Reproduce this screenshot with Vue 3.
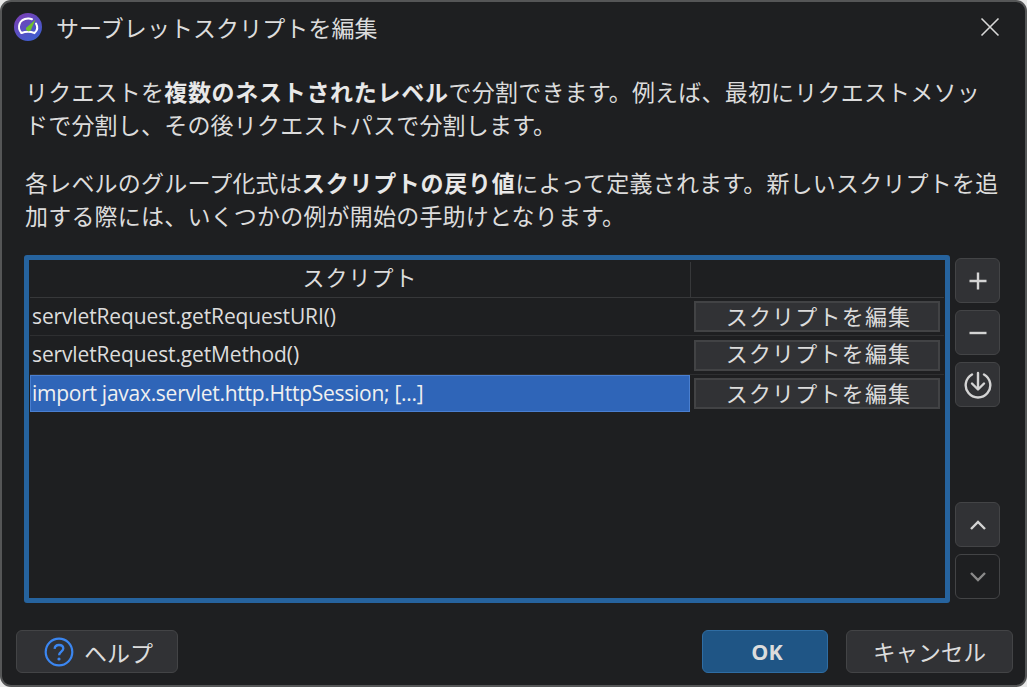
<script setup>
const rows = [
  { text: 'servletRequest.getRequestURI()' },
  { text: 'servletRequest.getMethod()' },
  { text: 'import javax.servlet.http.HttpSession; [...]', selected: true }
]
</script>

<template>
  <div class="win">
    <header class="title">
      <svg class="logo" width="28" height="28" viewBox="0 0 28 28">
        <defs>
          <linearGradient id="lg" x1="0.2" y1="0" x2="0.8" y2="1">
            <stop offset="0" stop-color="#7a3fb5" />
            <stop offset="1" stop-color="#3a5fd0" />
          </linearGradient>
        </defs>
        <circle cx="14" cy="14" r="14" fill="url(#lg)" />
        <path d="M7.5 20C3 15 4.5 6 14 5.5C15.5 5.4 17 5.8 18 6.2" fill="none" stroke="#fff" stroke-width="2" stroke-linecap="round" />
        <path d="M22 10.5C24 14 23.5 17.5 20.5 20C16 18.3 12 18.3 7.5 20" fill="none" stroke="#fff" stroke-width="2" stroke-linecap="round" />
        <path d="M21.5 6.5L16.8 17.2A2.8 2.8 0 0 1 11.9 15Z" fill="#6fc02d" />
      </svg>
      <span class="title-text">サーブレットスクリプトを編集</span>
      <svg class="close" width="20" height="20" viewBox="0 0 20 20">
        <path d="M1.5 1.5L18.5 18.5M18.5 1.5L1.5 18.5" stroke="#d8d8d8" stroke-width="1.6" fill="none" />
      </svg>
    </header>

    <section class="desc">
      <p>リクエストを<b>複数のネストされたレベル</b>で分割できます。例えば、最初にリクエストメソッ<br />ドで分割し、その後リクエストパスで分割します。</p>
      <p>各レベルのグループ化式は<b>スクリプトの戻り値</b>によって定義されます。新しいスクリプトを追<br />加する際には、いくつかの例が開始の手助けとなります。</p>
    </section>

    <section class="body">
      <div class="table">
        <div class="thead">
          <div class="th main">スクリプト</div>
          <div class="th side"></div>
        </div>
        <div v-for="r in rows" :key="r.text" class="row">
          <div class="cell" :class="{ sel: r.selected }">{{ r.text }}</div>
          <div class="action"><button class="edit">スクリプトを編集</button></div>
        </div>
      </div>

      <aside class="tools">
        <button class="tool">
          <svg width="22" height="22" viewBox="0 0 22 22"><path d="M11 2.5V19.5M2.5 11H19.5" stroke="#d4d4d4" stroke-width="2.4" fill="none" /></svg>
        </button>
        <button class="tool">
          <svg width="22" height="22" viewBox="0 0 22 22"><path d="M2.5 11H19.5" stroke="#d4d4d4" stroke-width="2.4" fill="none" /></svg>
        </button>
        <button class="tool">
          <svg width="28" height="28" viewBox="0 0 28 28" fill="none" stroke="#d4d4d4" stroke-width="2.4">
            <path d="M8 3.5A12.3 12.3 0 1 0 20 3.5" stroke-linecap="round" />
            <path d="M14 2V18M8 12.5L14 18.5L20 12.5" stroke-linecap="round" stroke-linejoin="round" />
          </svg>
        </button>
        <div class="spacer"></div>
        <button class="tool">
          <svg width="18" height="12" viewBox="0 0 18 12"><path d="M2 10L9 3L16 10" stroke="#d4d4d4" stroke-width="2.4" fill="none" /></svg>
        </button>
        <button class="tool off">
          <svg width="18" height="12" viewBox="0 0 18 12"><path d="M2 2L9 9L16 2" stroke="#8a8a8a" stroke-width="2.4" fill="none" /></svg>
        </button>
      </aside>
    </section>

    <footer class="foot">
      <button class="btn help">
        <svg width="30" height="30" viewBox="0 0 30 30" fill="none">
          <circle cx="15" cy="15" r="13.3" stroke="#3b86f0" stroke-width="2.2" />
          <path d="M10.6 11.8C10.8 9.2 12.6 8 15 8C17.6 8 19.3 9.5 19.3 11.6C19.3 14.6 15.1 14.8 15.1 18.2" stroke="#3b86f0" stroke-width="2.3" />
          <circle cx="15" cy="22" r="1.6" fill="#3b86f0" />
        </svg>
        <span>ヘルプ</span>
      </button>
      <div class="grow"></div>
      <button class="btn ok">OK</button>
      <button class="btn cancel">キャンセル</button>
    </footer>
  </div>
</template>

<style scoped>
.win {
  box-sizing: border-box;
  width: 1027px;
  height: 687px;
  background: #1e1f21;
  border: 2px solid #555657;
  border-radius: 11px;
  color: #dcdcdc;
  font-family: "Noto Sans CJK JP", "Noto Sans", sans-serif;
  display: flex;
  flex-direction: column;
  overflow: hidden;
}
.title {
  display: flex;
  align-items: center;
  height: 49px;
  padding: 0 25px 0 12px;
  flex: none;
}
.logo { flex: none; }
.title-text {
  margin-left: 14px;
  font-size: 23px;
  letter-spacing: 0.07px;
  flex: 1;
}
.close { flex: none; }
.desc {
  padding: 24px 0 0 23px;
  font-size: 23px;
  letter-spacing: 0.2px;
  line-height: 33px;
  height: 182px;
  box-sizing: border-box;
  flex: none;
}
.desc p { margin: 0 0 25px; white-space: nowrap; }
.desc b { font-weight: 700; color: #e8e8e8; letter-spacing: 0.7px; }
.body {
  display: flex;
  gap: 5px;
  padding-left: 22px;
  height: 348px;
  flex: none;
  margin-top: 22px;
}
.table {
  box-sizing: border-box;
  width: 926px;
  height: 348px;
  border: 5px solid #26639e;
  border-radius: 3px;
  background: #1e1f21;
  padding: 2px 1px 0 1px;
  font-size: 20px;
}
.thead {
  display: flex;
  height: 36px;
  box-sizing: border-box;
  border-bottom: 1px solid #37383a;
}
.th {
  display: flex;
  align-items: center;
  justify-content: center;
}
.th.main {
  width: 661px;
  font-size: 22px;
  letter-spacing: 1px;
  padding-bottom: 7px;
  box-sizing: border-box;
  border-right: 1px solid #37383a;
}
.th.side { flex: 1; }
.row {
  display: flex;
  height: 38px;
  box-sizing: border-box;
  border-bottom: 1px solid #2e2f31;
}
.row:nth-child(3) { height: 39px; }
.row:nth-child(3) .action { padding-top: 4px; }
.row:nth-child(3) .edit { line-height: 20px; padding-bottom: 8px; }
.row:last-child { border-bottom: 0; }
.cell {
  width: 660px;
  box-sizing: border-box;
  display: flex;
  align-items: center;
  padding: 0 0 2px 2px;
  font-family: "Open Sans", sans-serif;
  font-size: 21px;
  letter-spacing: -0.13px;
  color: #dcdcdc;
}
.cell.sel {
  background: #2f65b8;
  border: 1px solid #4a7fd0;
  padding: 0 0 2px 1px;
  color: #f0f0f0;
  height: 37px;
  letter-spacing: -0.27px;
}
.action {
  flex: 1;
  padding: 3px 4px 3px 4px;
  display: flex;
}
.edit {
  flex: 1;
  height: 31px;
  background: #313235;
  border: 2px solid #424345;
  color: #dcdcdc;
  font-family: "Noto Sans CJK JP", sans-serif;
  font-size: 22px;
  line-height: 24px;
  padding: 0 0 4px 3px;
  letter-spacing: 1.2px;
}
.tools {
  display: flex;
  flex-direction: column;
  gap: 7px;
  padding-top: 3px;
  padding-bottom: 4px;
}
.spacer { flex: 1; }
.tool {
  width: 45px;
  height: 45px;
  padding: 0;
  box-sizing: border-box;
  background: #313235;
  border: 1px solid #434446;
  border-radius: 6px;
  display: flex;
  align-items: center;
  justify-content: center;
}
.tool.off { background: #1e1f21; }
.foot {
  display: flex;
  gap: 18px;
  padding: 27px 12px 0 14px;
  align-items: flex-start;
}
.grow { flex: 1; }
.btn {
  height: 43px;
  box-sizing: border-box;
  background: #313235;
  border: 1px solid #434446;
  border-radius: 6px;
  color: #dcdcdc;
  font-family: "Noto Sans CJK JP", sans-serif;
  font-size: 22.6px;
  padding: 0;
  display: flex;
  align-items: center;
  justify-content: center;
}
.help {
  width: 162px;
  gap: 10px;
  padding-left: 3px;
  font-size: 23px;
}
.ok {
  width: 126px;
  padding-left: 4px;
  background: #1f5585;
  border-color: #2f6da3;
  font-family: "Open Sans", sans-serif;
  font-weight: 700;
  font-size: 21.5px;
}
.cancel { width: 167px; }
</style>

<style>
html, body { background: #e8e8e8; margin: 0; }
</style>
